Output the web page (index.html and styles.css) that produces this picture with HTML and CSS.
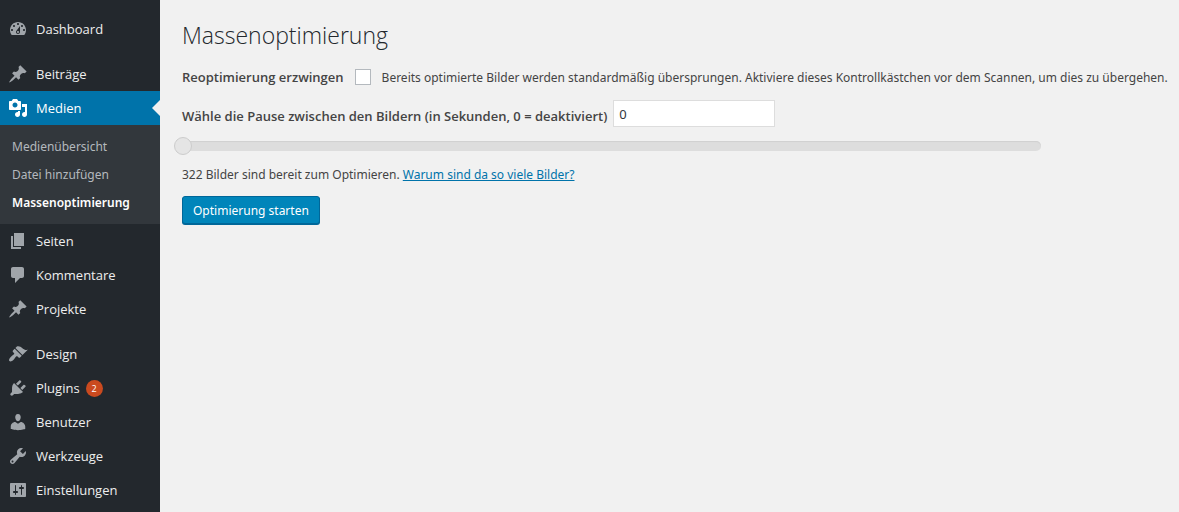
FILE: index.html
```html
<!DOCTYPE html>
<html lang="de">
<head>
    <meta charset="UTF-8">
    <meta name="viewport" content="width=device-width, initial-scale=1.0">
    <title>Massenoptimierung</title>
    <link rel="stylesheet" href="styles.css">
</head>
<body>
    <!-- Admin Menu -->
    <nav class="admin-menu" aria-label="Hauptmenü">
        <ul class="menu-list">
            <li>
                <a class="menu-item" href="#">
                    <svg class="menu-icon" viewBox="0 0 20 20"><path d="M3.76 16h12.48c1.1-1.37 1.76-3.11 1.76-5 0-4.42-3.58-8-8-8s-8 3.58-8 8c0 1.89.66 3.63 1.76 5zM10 4c.55 0 1 .45 1 1s-.45 1-1 1-1-.45-1-1 .45-1 1-1zM6 6c.55 0 1 .45 1 1s-.45 1-1 1-1-.45-1-1 .45-1 1-1zm8 0c.55 0 1 .45 1 1s-.45 1-1 1-1-.45-1-1 .45-1 1-1zm-5.37 5.55L12 7v6c0 1.1-.9 2-2 2s-2-.9-2-2c0-.57.24-1.08.63-1.45zM4 10c.55 0 1 .45 1 1s-.45 1-1 1-1-.45-1-1 .45-1 1-1zm12 0c.55 0 1 .45 1 1s-.45 1-1 1-1-.45-1-1 .45-1 1-1zm-5 3c0-.55-.45-1-1-1s-1 .45-1 1 .45 1 1 1 1-.45 1-1z"/></svg>
                    <span>Dashboard</span>
                </a>
            </li>
            <li class="menu-separator"></li>
            <li>
                <a class="menu-item" href="#">
                    <svg class="menu-icon" viewBox="0 0 20 20"><path d="M10.44 3.02l1.82-1.82 6.36 6.35-1.83 1.82c-1.05-.68-2.48-.57-3.41.36l-.75.75c-.92.93-1.04 2.35-.35 3.41l-1.83 1.82-2.41-2.41-2.8 2.79c-.42.42-3.38 2.71-3.8 2.29s1.86-3.39 2.28-3.81l2.79-2.79L4.1 9.36l1.83-1.82c1.05.69 2.48.57 3.4-.36l.75-.75c.93-.92 1.05-2.35.36-3.41z"/></svg>
                    <span>Beiträge</span>
                </a>
            </li>
            <li>
                <a class="menu-item current" href="#">
                    <svg class="menu-icon" viewBox="0 0 20 20"><path d="M13 11V4c0-.55-.45-1-1-1h-1.67L9 1H5L3.67 3H2c-.55 0-1 .45-1 1v7c0 .55.45 1 1 1h10c.55 0 1-.45 1-1zM7 4.5c1.38 0 2.5 1.12 2.5 2.5S8.38 9.5 7 9.5 4.5 8.38 4.5 7 5.62 4.5 7 4.5zM14 6h5v10.5c0 1.38-1.12 2.5-2.5 2.5S14 17.88 14 16.5s1.12-2.5 2.5-2.5c.17 0 .34.02.5.05V9h-3V6zm-4 8.05V13h2v3.5c0 1.38-1.12 2.5-2.5 2.5S7 17.88 7 16.5 8.12 14 9.5 14c.17 0 .34.02.5.05z"/></svg>
                    <span>Medien</span>
                </a>
                <ul class="submenu">
                    <li><a href="#">Medienübersicht</a></li>
                    <li><a href="#">Datei hinzufügen</a></li>
                    <li><a class="active" href="#">Massenoptimierung</a></li>
                </ul>
            </li>
            <li>
                <a class="menu-item" href="#">
                    <svg class="menu-icon" viewBox="0 0 20 20"><path d="M6 15V2h10v13H6zm-1 1h8v2H3V5h2v11z"/></svg>
                    <span>Seiten</span>
                </a>
            </li>
            <li>
                <a class="menu-item" href="#">
                    <svg class="menu-icon" viewBox="0 0 20 20"><path d="M5 2h9c1.1 0 2 .9 2 2v7c0 1.1-.9 2-2 2h-2l-5 5v-5H5c-1.1 0-2-.9-2-2V4c0-1.1.9-2 2-2z"/></svg>
                    <span>Kommentare</span>
                </a>
            </li>
            <li>
                <a class="menu-item" href="#">
                    <svg class="menu-icon" viewBox="0 0 20 20"><path d="M10.44 3.02l1.82-1.82 6.36 6.35-1.83 1.82c-1.05-.68-2.48-.57-3.41.36l-.75.75c-.92.93-1.04 2.35-.35 3.41l-1.83 1.82-2.41-2.41-2.8 2.79c-.42.42-3.38 2.71-3.8 2.29s1.86-3.39 2.28-3.81l2.79-2.79L4.1 9.36l1.83-1.82c1.05.69 2.48.57 3.4-.36l.75-.75c.93-.92 1.05-2.35.36-3.41z"/></svg>
                    <span>Projekte</span>
                </a>
            </li>
            <li class="menu-separator"></li>
            <li>
                <a class="menu-item" href="#">
                    <svg class="menu-icon" viewBox="0 0 20 20"><path d="M14.48 11.06L7.41 3.99l1.5-1.5c.5-.56 2.3-.47 3.51.32 1.21.8 1.43 1.28 2.91 2.1 1.18.64 2.45 1.26 4.45.85zm-.71.71L6.7 4.7 4.93 6.47c-.39.39-.39 1.02 0 1.41l1.06 1.06c.39.39.39 1.03 0 1.42-.6.6-1.43 1.11-2.21 1.69-.35.26-.7.53-1.01.84C1.43 14.23.4 16.08 1.4 17.07c.99 1 2.84-.03 4.18-1.36.31-.31.58-.66.85-1.02.57-.78 1.08-1.61 1.69-2.21.39-.39 1.02-.39 1.41 0l1.06 1.06c.39.39 1.02.39 1.41 0z"/></svg>
                    <span>Design</span>
                </a>
            </li>
            <li>
                <a class="menu-item" href="#">
                    <svg class="menu-icon" viewBox="0 0 20 20"><path d="M13.11 4.36L9.87 7.6 8 5.73l3.24-3.24c.35-.34 1.05-.2 1.56.32.52.51.66 1.21.31 1.55zm-8 1.77l.91-1.12 9.01 9.01-1.19.84c-.71.71-2.63 1.16-3.82 1.16H6.14L4.9 17.26c-.59.59-1.54.59-2.12 0-.59-.58-.59-1.53 0-2.12l1.24-1.24v-3.88c0-1.13.4-3.19 1.09-3.89zm7.26 3.97l3.24-3.24c.34-.35 1.04-.21 1.55.31.52.51.66 1.21.31 1.55l-3.24 3.25z"/></svg>
                    <span>Plugins</span>
                    <span class="update-count">2</span>
                </a>
            </li>
            <li>
                <a class="menu-item" href="#">
                    <svg class="menu-icon" viewBox="0 0 20 20"><path d="M10 9.25c-2.27 0-2.73-3.44-2.73-3.44C7 4.02 7.82 2 9.97 2c2.16 0 2.98 2.02 2.71 3.81 0 0-.41 3.44-2.68 3.44zm0 2.57L12.72 10c2.39 0 4.52 2.33 4.52 4.53v2.49s-3.65 1.13-7.24 1.13c-3.65 0-7.24-1.13-7.24-1.13v-2.49c0-2.25 1.94-4.48 4.47-4.48z"/></svg>
                    <span>Benutzer</span>
                </a>
            </li>
            <li>
                <a class="menu-item" href="#">
                    <svg class="menu-icon" viewBox="0 0 20 20"><path d="M16.68 9.77c-1.34 1.34-3.3 1.67-4.95.99l-5.41 6.52c-.99.99-2.59.99-3.58 0s-.99-2.59 0-3.57l6.52-5.42c-.68-1.65-.35-3.61.99-4.95 1.28-1.28 3.12-1.62 4.72-1.06l-2.89 2.89 2.82 2.82 2.86-2.87c.53 1.58.18 3.39-1.08 4.65zM3.81 16.21c.4.39 1.04.39 1.43 0 .4-.4.4-1.04 0-1.43-.39-.4-1.03-.4-1.43 0-.39.39-.39 1.03 0 1.43z"/></svg>
                    <span>Werkzeuge</span>
                </a>
            </li>
            <li>
                <a class="menu-item" href="#">
                    <svg class="menu-icon" viewBox="0 0 20 20"><path d="M18 16V4c0-.55-.45-1-1-1H3c-.55 0-1 .45-1 1v12c0 .55.45 1 1 1h14c.55 0 1-.45 1-1zM8 11h1c.55 0 1 .45 1 1s-.45 1-1 1H8v1.5c0 .28-.22.5-.5.5s-.5-.22-.5-.5V13H6c-.55 0-1-.45-1-1s.45-1 1-1h1V5.5c0-.28.22-.5.5-.5s.5.22.5.5V11zm5-2h-1c-.55 0-1-.45-1-1s.45-1 1-1h1V5.5c0-.28.22-.5.5-.5s.5.22.5.5V7h1c.55 0 1 .45 1 1s-.45 1-1 1h-1v5.5c0 .28-.22.5-.5.5s-.5-.22-.5-.5V9z"/></svg>
                    <span>Einstellungen</span>
                </a>
            </li>
        </ul>
    </nav>

    <!-- Bulk Optimizer -->
    <main class="content">
        <h1>Massenoptimierung</h1>
        <form class="bulk-form">
            <div class="force-row">
                <label class="field-label" for="force">Reoptimierung erzwingen</label>
                <input class="force-check" type="checkbox" id="force" aria-describedby="force-help">
                <span class="force-help" id="force-help">Bereits optimierte Bilder werden standardmäßig übersprungen. Aktiviere dieses Kontrollkästchen vor dem Scannen, um dies zu übergehen.</span>
            </div>
            <div class="delay-row">
                <label class="field-label" for="delay">Wähle die Pause zwischen den Bildern (in Sekunden, 0 = deaktiviert)</label>
                <input class="delay-input" type="text" id="delay" value="0">
            </div>
            <input class="delay-slider" type="range" id="delay-slider" min="0" max="30" value="0" aria-label="Pause in Sekunden">
            <p class="status">322 Bilder sind bereit zum Optimieren. <a href="#">Warum sind da so viele Bilder?</a></p>
            <button class="start-button" type="button">Optimierung starten</button>
        </form>
    </main>

    <script>
        // Keep the slider and the text box in step
        const delay = document.getElementById('delay');
        const slider = document.getElementById('delay-slider');

        slider.addEventListener('input', function() {
            delay.value = slider.value;
        });

        delay.addEventListener('change', function() {
            slider.value = delay.value;
        });
    </script>
</body>
</html>
```
FILE: styles.css
```css
* {
    box-sizing: border-box;
}

body {
    display: flex;
    min-height: 100vh;
    margin: 0;
    background-color: #f1f1f1;
    color: #444;
    font-family: 'Noto Sans', 'Open Sans', sans-serif;
    font-size: 12px;
}

/* Admin Menu */
.admin-menu {
    flex: 0 0 160px;
    padding-top: 12px;
    background-color: #23282d;
}

.menu-list,
.submenu {
    margin: 0;
    padding: 0;
    list-style: none;
}

.menu-item {
    display: flex;
    align-items: center;
    height: 34px;
    padding-left: 8px;
    gap: 8px;
    color: #eee;
    font-family: 'Open Sans', sans-serif;
    font-size: 13px;
    text-decoration: none;
}

.menu-item:hover {
    color: #00b9eb;
}

.menu-icon {
    width: 20px;
    height: 20px;
    fill: #a0a5aa;
}

.menu-separator {
    height: 11px;
}

.menu-item.current {
    position: relative;
    background-color: #0073aa;
    color: #fff;
}

.menu-item.current .menu-icon {
    fill: #fff;
}

/* Arrow pointing at the content */
.menu-item.current::after {
    content: '';
    position: absolute;
    top: 9px;
    right: 0;
    border: 8px solid transparent;
    border-left-width: 0;
    border-right-color: #f1f1f1;
}

.submenu {
    padding: 8px 0 7px;
    background-color: #32373c;
}

.submenu a {
    display: block;
    padding-left: 12px;
    color: #b4b9be;
    line-height: 28px;
    text-decoration: none;
}

.submenu .active {
    color: #fff;
    font-weight: 600;
}

.update-count {
    width: 17px;
    border-radius: 9px;
    background-color: #ca4a1f;
    color: #fff;
    font-size: 9px;
    line-height: 17px;
    text-align: center;
    margin-left: -2px;
}

/* Content */
.content {
    flex: 1;
    min-width: 0;
    padding: 20px 4px 20px 22px;
}

h1 {
    margin: 0;
    color: #23282d;
    font-family: 'Open Sans', sans-serif;
    font-size: 23px;
    font-weight: 300;
    line-height: 30px;
}

.force-row,
.delay-row {
    display: flex;
    align-items: center;
}

.force-row {
    gap: 11px;
    margin-top: 18px;
}

.delay-row {
    gap: 6px;
    margin-top: 14px;
}

.field-label {
    flex-shrink: 0;
    font-family: 'Open Sans', sans-serif;
    font-size: 13px;
    font-weight: 600;
}

.delay-row .field-label {
    padding-top: 4px;
}

.force-check {
    appearance: none;
    flex-shrink: 0;
    width: 16px;
    height: 16px;
    margin: 0;
    border: 1px solid #b4b9be;
    background-color: #fff;
}

.force-check:checked {
    background-color: #1e8cbe;
}

.delay-input {
    width: 162px;
    height: 27px;
    padding: 0 5px;
    border: 1px solid #ddd;
    background-color: #fff;
    color: #32373c;
    font: inherit;
    font-size: 13px;
}

/* Slider */
.delay-slider {
    appearance: none;
    display: block;
    width: calc(100% - 134px);
    height: 18px;
    margin: 10px 0 0;
    background: none;
}

.delay-slider::-webkit-slider-runnable-track {
    height: 10px;
    border-radius: 5px;
    background-color: #ddd;
    box-shadow: inset 0 1px 1px #d0d0d0;
}

.delay-slider::-webkit-slider-thumb {
    appearance: none;
    width: 18px;
    height: 18px;
    margin: -4px 0 0 -8px;
    border: 1px solid #ccc;
    border-radius: 50%;
    background-color: #e5e5e5;
}

.status {
    margin: 10px 0 11px;
    line-height: 20px;
}

.status a {
    color: #0073aa;
}

.start-button {
    height: 28px;
    padding: 0 10px;
    border: 1px solid #006799;
    border-radius: 3px;
    background-color: #0085ba;
    box-shadow: 0 1px 0 #006799;
    color: #fff;
    font: inherit;
    cursor: pointer;
}
```
